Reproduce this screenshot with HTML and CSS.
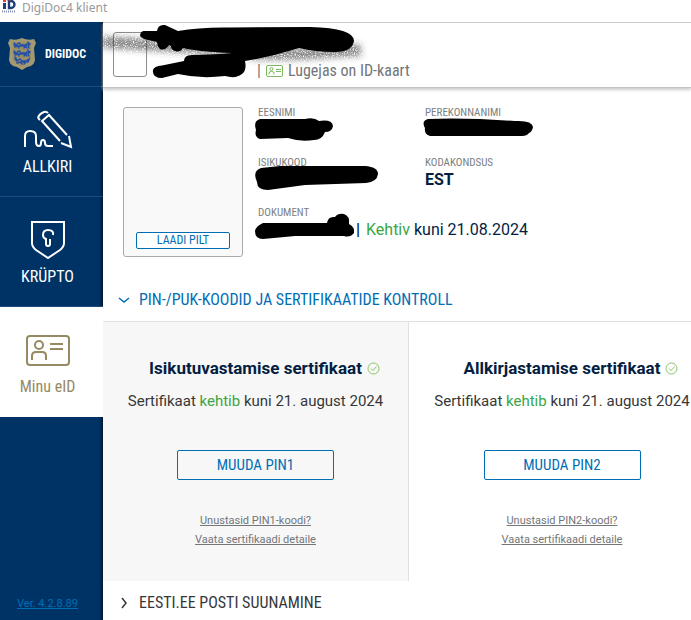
FILE: index.html
```html
<!DOCTYPE html>
<html lang="et">
<head>
  <meta charset="UTF-8" />
  <meta name="viewport" content="width=device-width, initial-scale=1.0" />
  <title>DigiDoc4 klient</title>
  <link rel="stylesheet" href="styles.css">
</head>
<body>

  <div class="titlebar">
    <svg class="app-icon" viewBox="0 0 15 14" aria-hidden="true">
      <rect x="1" y="0" width="3" height="2" fill="#d8432f"/>
      <path d="M1 3h3v6H1z" fill="#1b3f7c"/>
      <path d="M7 1h2a3.500 3.500 0 0 1 0 7H7z" fill="none" stroke="#1b3f7c" stroke-width="2.400"/>
      <path d="M5 0h4" stroke="#d8432f"/>
      <path d="M0 11.500h14" stroke="#8291b5" stroke-width="2" stroke-dasharray="1 1"/>
    </svg>
    <span>DigiDoc4 klient</span>
  </div>

  <div class="app">
    <nav class="sidebar">
      <div class="brand">
        <svg class="emblem" viewBox="0 0 30 32" aria-hidden="true">
          <path d="M3 1Q9 3 15 0Q21 3 27 1L29 5L27 10L28 22Q27 28 20 29L15 32L10 29Q3 28 2 22L3 10L1 5Z" fill="#a49a72"/>
          <path d="M6 4h18v17q-1 5-9 7q-8-2-9-7z" fill="#998f67"/>
          <g fill="none" stroke="#2450a8" stroke-width="1.500" stroke-linecap="round">
            <path id="lion" d="M7 5l2 2l3-2l2 2h5l2-2l2 1l-2 2l1 2M8 9l3-1l1 2M12 8h7l-2 2M18 8l2 2M7 7l2 1M21 4l1 3"/>
            <use href="#lion" y="8"/>
            <path d="M8 21l2 2l3-2l2 2h4l3-2l-1 3M10 25l3-1l2 2M14 24h5l-2 2M8 19l2 3"/>
          </g>
        </svg>
        <span>DIGIDOC</span>
      </div>
      <a class="nav-item" href="#">
        <svg class="nav-icon" viewBox="0 0 50 40" fill="none" stroke="#fff" stroke-width="2" aria-hidden="true">
          <path d="M2 38V27q0-5 5-5q6 0 6 5v6q0 4 3 4q2 0 2-3q0-3 2-3q2 0 2 3t3 3h5"/>
          <path d="M37 32L19 12l7-6l18 20M46 27l2 11l-10-4M15 9q1-4 6-6q2-1 4 1M15 9l2 2"/>
        </svg>
        <span>ALLKIRI</span>
      </a>
      <a class="nav-item" href="#">
        <svg class="nav-icon" viewBox="0 0 50 40" fill="none" stroke="#fff" stroke-width="2" aria-hidden="true">
          <path d="M9 3h32v21q0 4-4 7l-12 8l-12-8q-4-3-4-7z"/>
          <path d="M30 16q1-5-5-5q-5 0-5 5q0 3 3 4v5q0 2 2 2q2 0 2-2v-5"/>
        </svg>
        <span>KRÜPTO</span>
      </a>
      <a class="nav-item active" href="#">
        <svg class="nav-icon" viewBox="0 0 50 40" fill="none" stroke="#968a62" stroke-width="2" aria-hidden="true">
          <rect x="4" y="7" width="42" height="29" rx="3"/>
          <circle cx="16" cy="16" r="4"/>
          <path d="M9 31v-4q0-4 4-4h6q4 0 4 4v4M27 15h13M27 20h13"/>
        </svg>
        <span>Minu eID</span>
      </a>
      <a class="version" href="#">Ver. 4.2.8.89</a>
    </nav>

    <main class="content">
      <header class="card-bar">
        <div class="avatar"></div>
        <div class="card-status">
          <span>|</span>
          <svg class="card-icon" viewBox="0 0 17 12" fill="none" stroke="#7cb860" aria-hidden="true">
            <rect x=".5" y=".5" width="16" height="11" rx="1.500"/>
            <circle cx="5.500" cy="4" r="1.500"/>
            <path d="M3 9.500V8q0-1.500 2.500-1.500T8 8v1.500M10 4.500h5M10 6.500h5"/>
          </svg>
          <span>Lugejas on ID-kaart</span>
        </div>
        <svg class="scribble" viewBox="103 23 300 64" width="300" height="64" aria-hidden="true">
          <!-- sprayed haze behind the strokes -->
          <filter id="haze" x="-20%" y="-200%" width="140%" height="500%">
            <feGaussianBlur stdDeviation="3" result="soft"/>
            <feTurbulence type="fractalNoise" baseFrequency=".9" numOctaves="2"/>
            <feColorMatrix values="0 0 0 0 0  0 0 0 0 0  0 0 0 0 0  0 0 0 3 -.6"/>
            <feComposite in="soft" operator="in"/>
          </filter>
          <g fill="none" stroke="#333" stroke-opacity=".6" stroke-width="12" filter="url(#haze)">
            <path d="M102 42L170 46L230 50"/>
            <path d="M250 54L300 54L361 50"/>
          </g>
          <path d="M144 31L157 31Q158 24 165 25L178 31Q200 27 230 27.500L310 27Q354 28 354 41Q352 52 335 52Q315 52 299 48Q270 57 245 61Q247 70 242 74Q236 79 225 76Q200 79 178 74L162 78Q152 78 153 70Q154 66 162 65.500L184 61Q184 55 192 55L220 54L232 53Q200 52 183 48Q180 53 175 51Q171 50 171 46L169 45Q165 51 160 49Q157 46 157 42L144 39Q140 37 140 35Q141 31 144 31Z"/>
        </svg>
      </header>

      <section class="details">
        <div class="photo">
          <button class="btn btn-small">LAADI PILT</button>
        </div>
        <dl class="fields">
          <div class="field"><dt>EESNIMI</dt><dd></dd></div>
          <div class="field"><dt>PEREKONNANIMI</dt><dd></dd></div>
          <div class="field"><dt>ISIKUKOOD</dt><dd></dd></div>
          <div class="field"><dt>KODAKONDSUS</dt><dd><b>EST</b></dd></div>
          <div class="field wide"><dt>DOKUMENT</dt><dd class="validity"><b>|</b> <span class="ok">Kehtiv</span> kuni 21.08.2024</dd></div>
        </dl>
        <svg class="scribble" viewBox="103 88 440 191" width="440" height="191" aria-hidden="true">
          <path d="M260 119L305 119Q314 117 319 121Q332 119 333 126Q332 132 325 132Q322 140 314 140Q300 142 288 138L260 139Q254 137 256 130Q253 121 260 119Z"/>
          <path d="M428 119Q450 118 480 119L515 121Q532 120 533 127Q532 132 529 133Q527 136 522 136L430 136Q424 134 425 128Q421 121 428 119Z"/>
          <path d="M261 168L280 166L365 166Q378 167 378 174Q377 182 366 183L305 185L268 190Q257 190 257 182Q252 171 261 168Z"/>
          <path d="M263 223L327 223Q328 216 335 217Q338 213 344 214Q350 216 349 224Q355 227 354 233Q350 238 344 236L295 236L263 239Q255 239 255 231Q256 226 263 223Z"/>
        </svg>
      </section>

      <h2 class="section-title open">
        <svg class="chevron" viewBox="0 0 12 12" aria-hidden="true"><path d="M1 4l5 4l5-4"/></svg>
        PIN-/PUK-KOODID JA SERTIFIKAATIDE KONTROLL
      </h2>

      <div class="certs">
        <section class="cert">
          <h3>Isikutuvastamise sertifikaat
            <svg class="check" viewBox="0 0 13 13" aria-hidden="true"><circle cx="6.500" cy="6.500" r="5.500"/><path d="M4 6.500l2 2l3.500-4"/></svg>
          </h3>
          <p>Sertifikaat <span class="ok">kehtib</span> kuni 21. august 2024</p>
          <button class="btn">MUUDA PIN1</button>
          <a href="#">Unustasid PIN1-koodi?</a>
          <a href="#">Vaata sertifikaadi detaile</a>
        </section>
        <section class="cert">
          <h3>Allkirjastamise sertifikaat
            <svg class="check" viewBox="0 0 13 13" aria-hidden="true"><circle cx="6.500" cy="6.500" r="5.500"/><path d="M4 6.500l2 2l3.500-4"/></svg>
          </h3>
          <p>Sertifikaat <span class="ok">kehtib</span> kuni 21. august 2024</p>
          <button class="btn">MUUDA PIN2</button>
          <a href="#">Unustasid PIN2-koodi?</a>
          <a href="#">Vaata sertifikaadi detaile</a>
        </section>
      </div>

      <h2 class="section-title">
        <svg class="chevron" viewBox="0 0 12 12" aria-hidden="true"><path d="M4 1l4 5l-4 5"/></svg>
        EESTI.EE POSTI SUUNAMINE
      </h2>
    </main>
  </div>

</body>
</html>
```
FILE: styles.css
```css
* {
  box-sizing: border-box;
}
body {
  margin: 0;
  height: 100vh;
  display: flex;
  flex-direction: column;
  overflow: hidden;
  background: #fff;
  color: #363739;
  font-family: Roboto, sans-serif;
}
.titlebar {
  display: flex;
  gap: 5px;
  height: 22px;
  padding-left: 2px;
  color: #999;
  font: 12px/15px "Noto Sans", sans-serif;
  flex-shrink: 0;
}
.app-icon {
  width: 15px;
  height: 14px;
}
.app {
  display: flex;
  flex: 1;
  min-height: 0;
}

/* Sidebar */
.sidebar {
  display: flex;
  flex-direction: column;
  width: 103px;
  flex-shrink: 0;
  background: linear-gradient(to left, #001733, #003365 4px);
  font-family: "Roboto Condensed", Roboto, sans-serif;
}
.brand {
  display: flex;
  align-items: center;
  gap: 8px;
  height: 65px;
  padding-left: 7px;
  border-bottom: 1px solid #1b4a7c;
  color: #fff;
  font-size: 12px;
  font-weight: 700;
}
.emblem {
  width: 30px;
  height: 32px;
}
.nav-item {
  display: flex;
  flex-direction: column;
  align-items: center;
  gap: 6px;
  height: 110px;
  padding: 22px 8px 0 0;
  border-bottom: 1px solid #1b4a7c;
  color: #fff;
  font-size: 16px;
  line-height: 24px;
  text-decoration: none;
}
.nav-icon {
  width: 50px;
  height: 40px;
}
.nav-item.active {
  background: #fff;
  border-bottom: 0;
  color: #968a62;
}
.version {
  margin: auto 8px 7px 0;
  color: #006eb5;
  font: 11px/18px Roboto, sans-serif;
  text-align: center;
}

/* Card bar on top of the content */
.content {
  flex: 1;
  min-width: 0;
}
.card-bar {
  position: relative;
  display: flex;
  height: 66px;
  padding: 9px 10px 6px;
  border-top: 1px solid #ccc;
  border-bottom: 1px solid #c4c4c4;
  box-shadow: 0 2px 3px #ccc;
}
.avatar {
  width: 34px;
  height: 45px;
  border: 1px solid #8e8e8e;
  border-radius: 3px;
}
.card-status {
  display: flex;
  align-items: center;
  align-self: flex-end;
  gap: 5px;
  margin-left: 110px;
  color: #727679;
  font: 16px/20px "Roboto Condensed", Roboto, sans-serif;
}
.card-icon {
  width: 17px;
  height: 12px;
}
.scribble {
  position: absolute;
  top: 0;
  left: 0;
  overflow: visible;
}

/* Personal data */
.details {
  position: relative;
  display: flex;
  gap: 15px;
  padding: 19px 20px 22px;
}
.photo {
  display: flex;
  align-items: flex-end;
  justify-content: center;
  width: 120px;
  height: 150px;
  padding-bottom: 7px;
  border: 1px solid #aaa;
  border-radius: 3px;
  background: #f9f9f9;
}
.fields {
  display: grid;
  grid-template-columns: 167px 167px;
  align-content: start;
  row-gap: 16px;
  margin: 0;
}
.field.wide {
  grid-column: span 2;
}
.field dt {
  color: #7b7f82;
  font: 11px/12px "Roboto Condensed", Roboto, sans-serif;
}
.field dd {
  height: 22px;
  margin: 0;
  color: #041e42;
  font-size: 16px;
  line-height: 22px;
}
.field .validity {
  padding-left: 98px;
}
.ok {
  color: #3aa642;
}
.validity .ok {
  margin-left: 2px;
}

.btn {
  width: 157px;
  height: 30px;
  padding: 0;
  border: 1px solid #006eb5;
  border-radius: 2px;
  background: #fff;
  color: #006eb5;
  font: 15px/20px "Roboto Condensed", Roboto, sans-serif;
  cursor: pointer;
}
.btn-small {
  width: 94px;
  height: 17px;
  font-size: 12px;
  line-height: 15px;
}

/* Accordion */
.section-title {
  display: flex;
  align-items: center;
  gap: 9px;
  height: 43px;
  margin: 0;
  padding-left: 15px;
  font: 16px/20px "Roboto Condensed", Roboto, sans-serif;
}
.section-title.open {
  border-bottom: 1px solid #e0e0e0;
  color: #006eb5;
}
.chevron {
  width: 12px;
  height: 12px;
  fill: none;
  stroke: currentColor;
  stroke-width: 1.5;
}
.certs {
  display: grid;
  grid-template-columns: repeat(2, minmax(306px, 1fr));
}
.cert {
  display: flex;
  flex-direction: column;
  align-items: center;
  padding: 34px 10px 32px;
}
.cert:first-child {
  background: #f7f7f7;
  border-right: 1px solid #e0e0e0;
}
.cert h3 {
  display: flex;
  align-items: center;
  gap: 5px;
  margin: 0;
  padding-left: 18px;
  color: #041e42;
  font-size: 17px;
  line-height: 24px;
  white-space: nowrap;
}
.check {
  width: 13px;
  height: 13px;
  fill: none;
  stroke: #8cc368;
}
.cert p {
  margin: 11px 0 39px;
  font-size: 15px;
  line-height: 20px;
  white-space: nowrap;
}
.cert .btn {
  margin-bottom: 31px;
}
.cert:first-child .btn {
  background: #f7f7f7;
}
.cert a {
  color: #727679;
  font-size: 11px;
  line-height: 19px;
}
```
